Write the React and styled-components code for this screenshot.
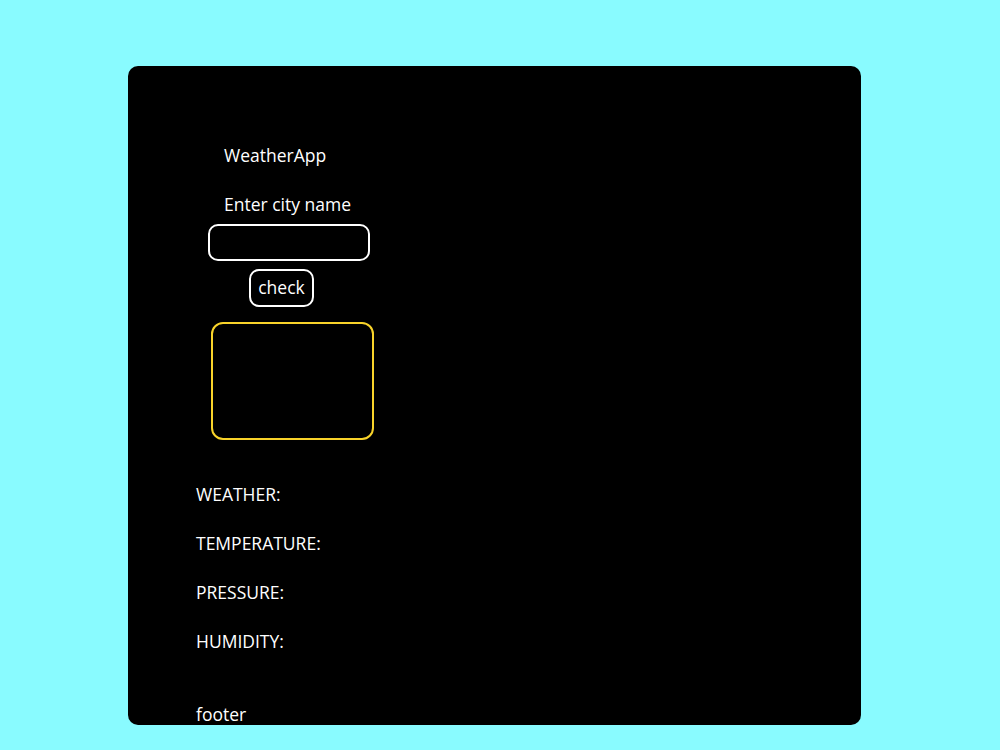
import React from 'react';
import styled, { createGlobalStyle } from 'styled-components';

const GlobalStyle = createGlobalStyle`
  html, body {
    margin: 0;
    padding: 0;
    background: #89fbff;
  }
  body {
    font-family: "Open Sans", "Noto Sans", sans-serif;
    color: #fff;
  }
`;

const Page = styled.div`
  width: 1000px;
  height: 750px;
  padding-top: 66px;
  padding-left: 128px;
  box-sizing: border-box;
`;

const Card = styled.div`
  width: 733px;
  height: 659px;
  background: #000;
  border-radius: 10px;
  box-sizing: border-box;
  padding: 78px 0 0 68px;
  display: flex;
  flex-direction: column;
  overflow: hidden;
`;

const Form = styled.div`
  display: flex;
  flex-direction: column;
  align-items: flex-start;
  padding-left: 12px;
`;

const Text = styled.div`
  font-size: 17.5px;
  line-height: 22px;
  margin-left: ${(p) => p.$indent || 0}px;
  margin-top: ${(p) => p.$gap || 0}px;
`;

const Input = styled.input`
  width: 162px;
  height: 37px;
  margin-top: 9px;
  box-sizing: border-box;
  background: #000;
  border: 2px solid #fff;
  border-radius: 10px;
  color: #fff;
  outline: none;
  font-family: inherit;
  font-size: 15px;
  padding: 0 10px;
`;

const Button = styled.button`
  width: 65px;
  height: 38px;
  margin-top: 8px;
  margin-left: 41px;
  box-sizing: border-box;
  background: #000;
  border: 2px solid #fff;
  border-radius: 10px;
  color: #fff;
  font-family: inherit;
  font-size: 17.5px;
  padding: 0 0 3px;
`;

const ResultBox = styled.div`
  width: 163px;
  height: 118px;
  margin-top: 15px;
  margin-left: 3px;
  box-sizing: border-box;
  border: 2px solid #f8d32a;
  border-radius: 12px;
`;

const Info = styled.div`
  display: flex;
  flex-direction: column;
  gap: 27px;
  margin-top: 43px;
`;

const Footer = styled.div`
  font-size: 17.5px;
  line-height: 22px;
  margin-top: 51px;
`;

const fields = ['WEATHER:', 'TEMPERATURE:', 'PRESSURE:', 'HUMIDITY:'];

const App = () => {
  return (
    <>
      <GlobalStyle />
      <Page>
        <Card>
          <Form>
            <Text $indent={16}>WeatherApp</Text>
            <Text $indent={16} $gap={27}>Enter city name</Text>
            <Input type="text" />
            <Button>check</Button>
            <ResultBox />
          </Form>
          <Info>
            {fields.map((f) => (
              <Text key={f}>{f}</Text>
            ))}
          </Info>
          <Footer>footer</Footer>
        </Card>
      </Page>
    </>
  );
};

export default App;
